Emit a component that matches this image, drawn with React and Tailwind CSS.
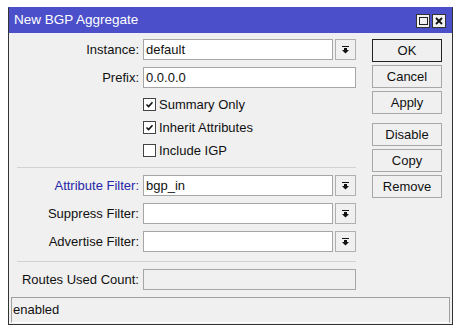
import React from "react";

const font = { fontFamily: '"Liberation Sans", Arial, sans-serif' };

function DropIcon() {
  return (
    <svg width="7" height="8" viewBox="0 0 7 8">
      <rect x="0" y="0" width="7" height="1" fill="#111" />
      <polygon points="2,2 5,2 5,4 7,4 3.5,7.5 0,4 2,4" fill="#111" />
    </svg>
  );
}

function Check({ checked }) {
  return (
    <div className="w-[13px] h-[13px] border border-[#444] bg-white flex items-center justify-center">
      {checked && (
        <svg width="9" height="9" viewBox="0 0 9 9">
          <path d="M1.5 4.5 L3.6 6.6 L7.5 2.2" stroke="#111" strokeWidth="1.6" fill="none" />
        </svg>
      )}
    </div>
  );
}

function Label({ children, blue }) {
  return (
    <div className={`text-right text-[13px] leading-[21px] whitespace-nowrap ${blue ? "text-[#2626a8]" : "text-[#111]"}`}>
      {children}
    </div>
  );
}

function Input({ value, disabled }) {
  return (
    <div
      className={`h-[21px] border border-[#a6a6a6] text-[13px] leading-[19px] pl-[2px] text-[#111] ${
        disabled ? "bg-[#f0f0f0]" : "bg-white"
      }`}
    >
      {value}
    </div>
  );
}

function ComboRow({ label, value, blue }) {
  return (
    <div className="grid grid-cols-[130px_213px] gap-[4px] h-[21px]">
      <Label blue={blue}>{label}</Label>
      <div className="flex gap-[2px]">
        <div className="w-[190px]">
          <Input value={value} />
        </div>
        <div className="w-[21px] h-[21px] border border-[#b0b0b0] bg-[#f0f0f0] flex items-center justify-center">
          <DropIcon />
        </div>
      </div>
    </div>
  );
}

function CheckRow({ label, checked }) {
  return (
    <div className="grid grid-cols-[130px_213px] gap-[4px] h-[23px] items-center">
      <div />
      <div className="flex items-center gap-[3px] text-[13px] text-[#111]">
        <Check checked={checked} />
        <span>{label}</span>
      </div>
    </div>
  );
}

function Btn({ children, def, className = "" }) {
  return (
    <div
      className={`w-[70px] h-[23px] flex items-center justify-center text-[13px] text-[#111] bg-[#f0f0f0] border ${
        def ? "border-[#222]" : "border-[#a8a8a8]"
      } ${className}`}
    >
      {children}
    </div>
  );
}

export default function App() {
  return (
    <div className="w-[457px] h-[329px] bg-white pt-[7px] pl-[8px]" style={font}>
      <div className="w-[445px] h-[318px] border border-[#333] border-t-[#4b4fc9] bg-[#f0f0f0] flex flex-col">
        <div className="h-[25px] bg-[#4b4fc9] flex items-center justify-between pl-[5px] pr-[6px]">
          <span className="text-white text-[13.5px]">New BGP Aggregate</span>
          <div className="flex gap-[2px] mt-[1px]">
            <div className="w-[14px] h-[14px] bg-[#f0f0f0] border border-[#333] flex items-center justify-center">
              <div className="w-[9px] h-[8px] border border-[#222]" />
            </div>
            <div className="w-[14px] h-[14px] bg-[#f0f0f0] border border-[#333] flex items-center justify-center">
              <svg width="8" height="8" viewBox="0 0 8 8">
                <path d="M1 1 L7 7 M7 1 L1 7" stroke="#111" strokeWidth="1.8" />
              </svg>
            </div>
          </div>
        </div>
        <div className="flex-1 flex">
          <div className="w-[347px] flex flex-col pt-[6px]">
            <ComboRow label="Instance:" value="default" />
            <div className="grid grid-cols-[130px_213px] gap-[4px] h-[21px] mt-[7px]">
              <Label>Prefix:</Label>
              <Input value="0.0.0.0" />
            </div>
            <div className="mt-[5px]">
              <CheckRow label="Summary Only" checked />
              <CheckRow label="Inherit Attributes" checked />
              <CheckRow label="Include IGP" />
            </div>
            <div className="ml-[8px] w-[339px] h-px bg-[#d2d2d2] mt-[5px]" />
            <div className="mt-[7px] flex flex-col gap-[7px]">
              <ComboRow label="Attribute Filter:" value="bgp_in" blue />
              <ComboRow label="Suppress Filter:" value="" />
              <ComboRow label="Advertise Filter:" value="" />
            </div>
            <div className="ml-[8px] w-[339px] h-px bg-[#d2d2d2] mt-[9px]" />
            <div className="grid grid-cols-[130px_213px] gap-[4px] h-[21px] mt-[7px]">
              <Label>Routes Used Count:</Label>
              <Input value="" disabled />
            </div>
          </div>
          <div className="flex flex-col pl-[16px] pt-[6px]">
            <Btn def>OK</Btn>
            <Btn className="mt-[3px]">Cancel</Btn>
            <Btn className="mt-[3px]">Apply</Btn>
            <Btn className="mt-[9px]">Disable</Btn>
            <Btn className="mt-[3px]">Copy</Btn>
            <Btn className="mt-[3px]">Remove</Btn>
          </div>
        </div>
        <div className="mx-[2px] mb-[1px] h-[26px] border-t border-l border-r border-[#a0a0a0] border-b border-b-white text-[13px] leading-[23px] pl-[1px] text-[#111]">
          enabled
        </div>
      </div>
    </div>
  );
}
